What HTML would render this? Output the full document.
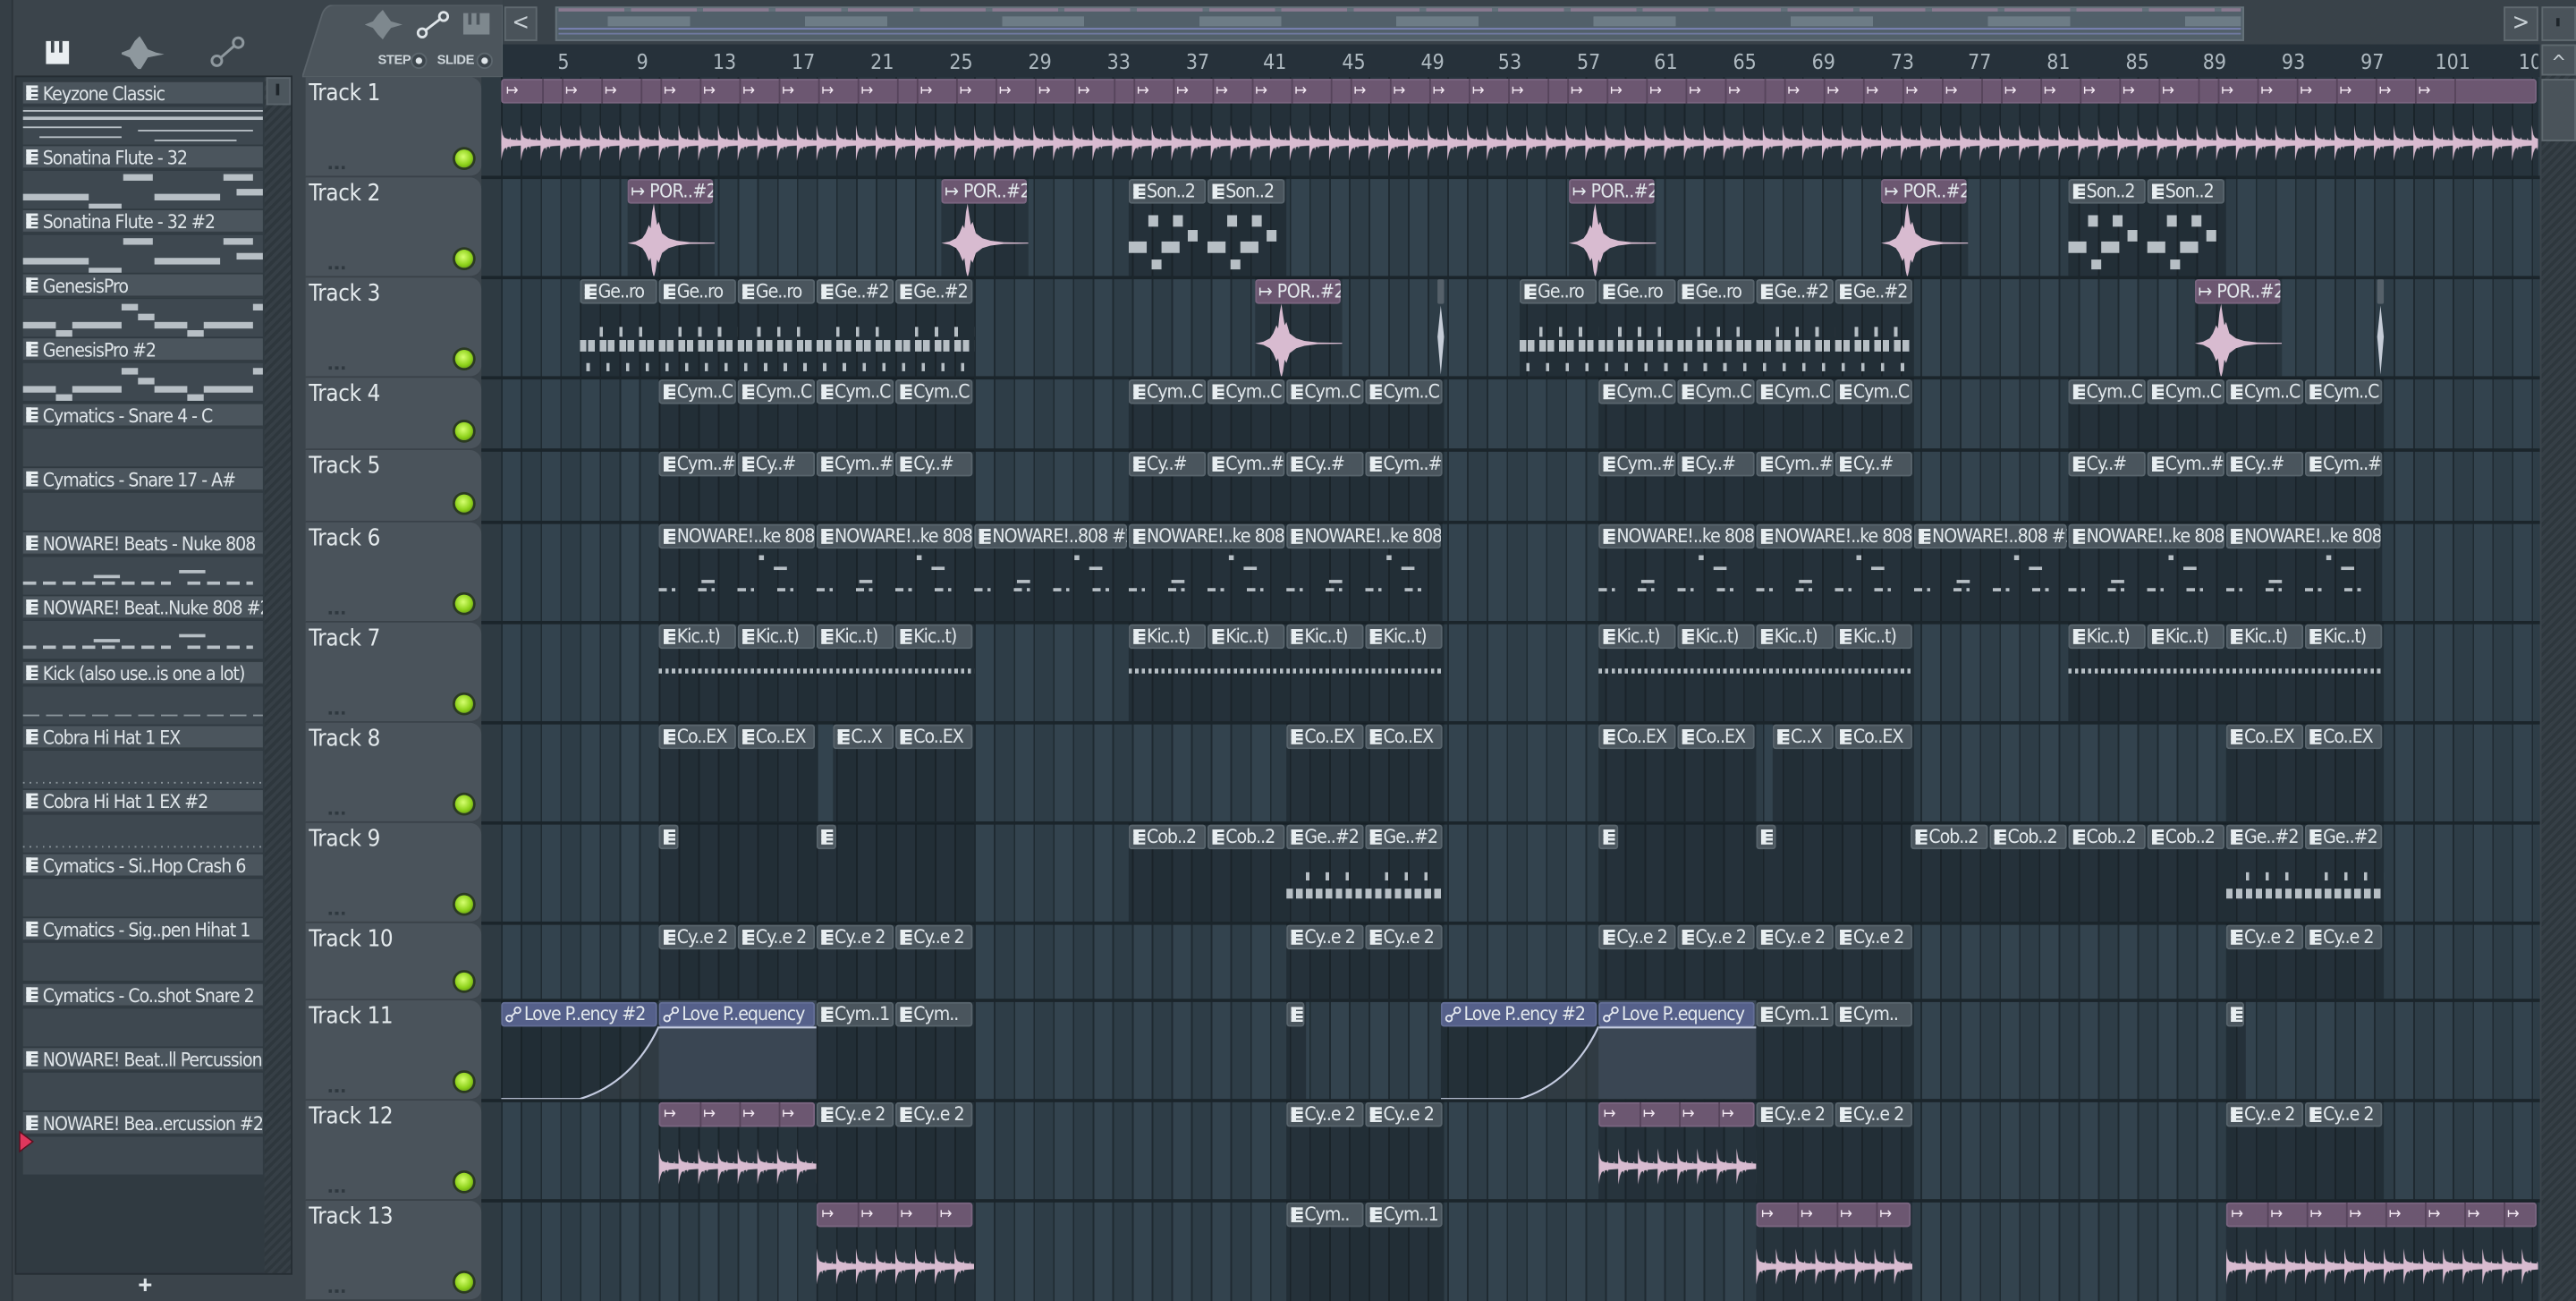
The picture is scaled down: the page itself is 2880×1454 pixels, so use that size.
<!DOCTYPE html>
<html><head><meta charset="utf-8">
<style>
*{margin:0;padding:0;box-sizing:border-box}
html,body{width:2880px;height:1454px;overflow:hidden;background:#3a434a}
#s{position:absolute;left:0;top:0;width:1568px;height:792px;transform:scale(1.83673,1.83586);transform-origin:0 0;background:#3b444b;font-family:"Liberation Sans Narrow","DejaVu Sans Condensed","Liberation Sans",sans-serif;color:#dfe5e9}
.ab{position:absolute}
.c{position:absolute;overflow:hidden}
.c .h{position:absolute;left:0;right:1px;top:1px;height:15px;border-radius:2px;font-size:11.5px;letter-spacing:-0.55px;line-height:15px;white-space:nowrap;overflow:hidden;padding-left:11px;color:#e2e8ec}
.p{background:rgba(18,26,32,.42)}
.p .h{background:#4a555d;box-shadow:inset 0 0 0 1px #58646c}
.p .h::before{content:"";position:absolute;left:3px;top:3px;width:7px;height:9px;background:linear-gradient(90deg,#e8eef1 0 3px,transparent 3px),repeating-linear-gradient(180deg,#e8eef1 0 1.6px,#4a555d 1.6px 2.6px),#e8eef1}
.a{background:rgba(18,26,32,.35)}
.a .h{background:#6c5771;box-shadow:inset 0 0 0 1px #7a6580;padding-left:2px;letter-spacing:-0.3px}
.au{background:rgba(18,26,32,.45)}
.au .h{background:#55608a;box-shadow:inset 0 0 0 1px #636e96;padding-left:14px}
.seg{display:inline-block;width:24px;height:15px;border-right:1px solid #56445b;font-size:10px;color:#f3e8f2;padding-left:1px;vertical-align:top;letter-spacing:0}
.trk{position:absolute;left:186px;width:107px;background:#4a535b;border-radius:0 7px 7px 0;border-bottom:1px solid #3a4249}
.trk b{position:absolute;left:2px;top:2px;font-weight:normal;font-size:14px;letter-spacing:-0.2px;color:#e4eaed}
.trk i{position:absolute;left:14px;bottom:4px;width:11px;height:2px;background:repeating-linear-gradient(90deg,#2f383f 0 2px,transparent 2px 4px)}
.trk u{position:absolute;right:5px;bottom:5px;width:11px;height:11px;border-radius:50%;background:radial-gradient(circle at 45% 40%,#d6ff70,#8ed21b 55%,#4f7d0c);box-shadow:0 0 0 1.5px #2b3a22}
.ch{position:absolute;left:14px;width:146px}
.ch .t{height:14px;background:#4b555d;border-bottom:1px solid #333c43;font-size:11.5px;letter-spacing:-0.55px;line-height:14px;padding-left:12px;white-space:nowrap;overflow:hidden;position:relative;color:#dfe5e9}
.ch .t::before{content:"";position:absolute;left:2px;top:2px;width:7px;height:9px;background:linear-gradient(90deg,#e8eef1 0 3px,transparent 3px),repeating-linear-gradient(180deg,#e8eef1 0 1.6px,#4b555d 1.6px 2.6px),#e8eef1}
.ch .bd{height:23px;background:#3e4850;margin-top:1px;position:relative}
.n{position:absolute;background:#b7bfc5}
.rn{position:absolute;top:30px;font-size:12.5px;color:#aeb9c0;transform:translateX(-50%)}
</style></head><body>
<div id="s">
<svg width="0" height="0" style="position:absolute"><defs>
<pattern id="wv" width="12" height="46" patternUnits="userSpaceOnUse"><path d="M0 25 L0 14 L1 20 L2 21.8 L4 22.5 L7 23 L12 23.4 L12 26.6 L7 27 L4 27.5 L2 28.5 L1 31 L0 36 Z" fill="#d8bbd0"/><path d="M5 23 L5.5 21.5 L6 23 Z M9 23 L9.5 22 L10 23 Z M5 27 L5.5 28.5 L6 27 Z M3 27 L3.5 29.5 L4 27 Z" fill="#d8bbd0"/></pattern>
<symbol id="por" viewBox="0 0 53 46"><path d="M0 25 L5 24 L9 22 L11 19 L13 14 L14 16 L15 6 L16 1 L17 8 L18 14 L19 12 L21 19 L25 22 L30 23.5 L38 24.5 L53 24.7 L53 25.3 L38 25.5 L30 26.5 L25 28 L21 31 L19 37 L18 35 L17 42 L16 46 L15 42 L14 34 L13 36 L11 31 L9 28 L5 26 Z" fill="#d8bbd0"/></symbol>
</defs></svg>

<!-- left strip -->
<div class="ab" style="left:0;top:0;width:8px;height:792px;background:#353e45;border-right:1px solid #2c343a"></div>
<div class="ab" style="left:28px;top:25px;width:14px;height:14px;background:#e9eef1"></div>
<div class="ab" style="left:31px;top:25px;width:2px;height:7px;background:#3b444b"></div>
<div class="ab" style="left:36px;top:25px;width:2px;height:7px;background:#3b444b"></div>
<svg class="ab" style="left:74px;top:22px" width="26" height="20"><path d="M0 10 L5 8 L8 3 L11 0 L13 3 L16 8 L21 10 L26 11 L21 12 L16 13 L13 18 L11 21 L8 18 L5 13 L0 11Z" fill="#8e989e"/></svg>
<svg class="ab" style="left:128px;top:22px" width="22" height="20"><circle cx="4" cy="15" r="3" fill="none" stroke="#8e989e" stroke-width="1.6"/><circle cx="17" cy="4" r="3" fill="none" stroke="#8e989e" stroke-width="1.6"/><line x1="6.5" y1="13" x2="14.5" y2="6" stroke="#8e989e" stroke-width="1.6"/></svg>
<div class="ab" style="left:9px;top:46px;width:169px;height:730px;background:#303a41;border:1px solid #252d33"></div>
<div class="ab" style="left:161px;top:47px;width:16px;height:728px;background:repeating-linear-gradient(135deg,#363f46 0 2px,#2e373d 2px 4px)"></div>
<div class="ab" style="left:162px;top:47px;width:15px;height:17px;background:#4c565d;border:1px solid #5b656c"></div>
<div class="ab" style="left:168px;top:51px;width:2px;height:7px;background:#1e252a"></div>
<div class="ab" style="left:84px;top:774px;font-size:15px;color:#dfe5e9;font-family:'Liberation Sans',sans-serif;font-weight:bold">+</div>

<div class="ch" style="top:50px"><div class="t">Keyzone Classic</div><div class="bd"><div class="n" style="left:0;top:2px;width:146px;height:1px"></div><div class="n" style="left:0;top:6px;width:146px;height:2px"></div><div class="n" style="left:0;top:12px;width:60px;height:1px"></div><div class="n" style="left:70px;top:14px;width:70px;height:1px"></div><div class="n" style="left:10px;top:18px;width:50px;height:1px"></div><div class="n" style="left:80px;top:20px;width:50px;height:1px"></div></div></div>
<div class="ch" style="top:89px"><div class="t">Sonatina Flute - 32</div><div class="bd"><div class="n" style="left:61px;top:2px;width:18px;height:4px"></div><div class="n" style="left:122px;top:2px;width:18px;height:4px"></div><div class="n" style="left:130px;top:11px;width:16px;height:4px"></div><div class="n" style="left:0;top:14px;width:40px;height:4px"></div><div class="n" style="left:80px;top:14px;width:40px;height:4px"></div><div class="n" style="left:40px;top:20px;width:20px;height:3px"></div></div></div>
<div class="ch" style="top:128px"><div class="t">Sonatina Flute - 32 #2</div><div class="bd"><div class="n" style="left:61px;top:2px;width:18px;height:4px"></div><div class="n" style="left:122px;top:2px;width:18px;height:4px"></div><div class="n" style="left:130px;top:11px;width:16px;height:4px"></div><div class="n" style="left:0;top:14px;width:40px;height:4px"></div><div class="n" style="left:80px;top:14px;width:40px;height:4px"></div><div class="n" style="left:40px;top:20px;width:20px;height:3px"></div></div></div>
<div class="ch" style="top:167px"><div class="t">GenesisPro</div><div class="bd"><div class="n" style="left:60px;top:3px;width:10px;height:4px"></div><div class="n" style="left:140px;top:3px;width:6px;height:4px"></div><div class="n" style="left:70px;top:9px;width:10px;height:4px"></div><div class="n" style="left:0;top:14px;width:20px;height:4px"></div><div class="n" style="left:30px;top:14px;width:30px;height:4px"></div><div class="n" style="left:80px;top:14px;width:20px;height:4px"></div><div class="n" style="left:110px;top:14px;width:30px;height:4px"></div><div class="n" style="left:20px;top:19px;width:10px;height:4px"></div><div class="n" style="left:100px;top:19px;width:10px;height:4px"></div></div></div>
<div class="ch" style="top:206px"><div class="t">GenesisPro #2</div><div class="bd"><div class="n" style="left:60px;top:3px;width:10px;height:4px"></div><div class="n" style="left:140px;top:3px;width:6px;height:4px"></div><div class="n" style="left:70px;top:9px;width:10px;height:4px"></div><div class="n" style="left:0;top:14px;width:20px;height:4px"></div><div class="n" style="left:30px;top:14px;width:30px;height:4px"></div><div class="n" style="left:80px;top:14px;width:20px;height:4px"></div><div class="n" style="left:110px;top:14px;width:30px;height:4px"></div><div class="n" style="left:20px;top:19px;width:10px;height:4px"></div><div class="n" style="left:100px;top:19px;width:10px;height:4px"></div></div></div>
<div class="ch" style="top:246px"><div class="t">Cymatics - Snare 4 - C</div><div class="bd"></div></div>
<div class="ch" style="top:285px"><div class="t">Cymatics - Snare 17 - A#</div><div class="bd"></div></div>
<div class="ch" style="top:324px"><div class="t">NOWARE! Beats - Nuke 808</div><div class="bd"><div class="n" style="left:95px;top:8px;width:16px;height:1.5px"></div><div class="n" style="left:43px;top:11px;width:16px;height:1.5px"></div><div class="n" style="left:0;top:15px;width:90px;height:1.5px;background:repeating-linear-gradient(90deg,#b7bfc5 0 8px,transparent 8px 12px)"></div><div class="n" style="left:100px;top:15px;width:40px;height:1.5px;background:repeating-linear-gradient(90deg,#b7bfc5 0 8px,transparent 8px 12px)"></div></div></div>
<div class="ch" style="top:363px"><div class="t">NOWARE! Beat..Nuke 808 #2</div><div class="bd"><div class="n" style="left:95px;top:8px;width:16px;height:1.5px"></div><div class="n" style="left:43px;top:11px;width:16px;height:1.5px"></div><div class="n" style="left:0;top:15px;width:90px;height:1.5px;background:repeating-linear-gradient(90deg,#b7bfc5 0 8px,transparent 8px 12px)"></div><div class="n" style="left:100px;top:15px;width:40px;height:1.5px;background:repeating-linear-gradient(90deg,#b7bfc5 0 8px,transparent 8px 12px)"></div></div></div>
<div class="ch" style="top:403px"><div class="t">Kick (also use..is one a lot)</div><div class="bd"><div class="n" style="left:0;top:17px;width:146px;height:1px;background:repeating-linear-gradient(90deg,#8a949a 0 10px,transparent 10px 14px)"></div></div></div>
<div class="ch" style="top:442px"><div class="t">Cobra Hi Hat 1 EX</div><div class="bd"><div class="n" style="left:0;top:19px;width:146px;height:1px;background:repeating-linear-gradient(90deg,#8a949a 0 1px,transparent 1px 4px)"></div></div></div>
<div class="ch" style="top:481px"><div class="t">Cobra Hi Hat 1 EX #2</div><div class="bd"><div class="n" style="left:0;top:19px;width:146px;height:1px;background:repeating-linear-gradient(90deg,#8a949a 0 1px,transparent 1px 4px)"></div></div></div>
<div class="ch" style="top:520px"><div class="t">Cymatics - Si..Hop Crash 6</div><div class="bd"></div></div>
<div class="ch" style="top:559px"><div class="t">Cymatics - Sig..pen Hihat 1</div><div class="bd"></div></div>
<div class="ch" style="top:599px"><div class="t">Cymatics - Co..shot Snare 2</div><div class="bd"></div></div>
<div class="ch" style="top:638px"><div class="t">NOWARE! Beat..ll Percussion</div><div class="bd"></div></div>
<div class="ch" style="top:677px"><div class="t">NOWARE! Bea..ercussion #2</div><div class="bd"></div></div>
<svg class="ab" style="left:11px;top:688px" width="10" height="14"><path d="M1 1 L9 7 L1 13Z" fill="#e0375d" stroke="#5a1020" stroke-width=".8"/></svg>

<!-- toolbar tab -->
<svg class="ab" style="left:184px;top:3px" width="122" height="44"><path d="M0 44 L12 6 Q14 0 20 0 L122 0 L122 44Z" fill="#4c555c" stroke="#5a636a" stroke-width="1"/></svg>
<svg class="ab" style="left:222px;top:6px" width="24" height="18"><path d="M0 9 L5 7 L8 3 L11 0 L13 3 L16 7 L23 9 L16 11 L13 15 L11 18 L8 15 L5 11Z" fill="#7e888e"/></svg>
<svg class="ab" style="left:253px;top:6px" width="22" height="18"><circle cx="4" cy="14" r="2.6" fill="none" stroke="#dfe5e9" stroke-width="1.5"/><circle cx="17" cy="4" r="2.6" fill="none" stroke="#dfe5e9" stroke-width="1.5"/><line x1="6.2" y1="12.3" x2="14.8" y2="5.7" stroke="#dfe5e9" stroke-width="1.5"/></svg>
<div class="ab" style="left:282px;top:8px;width:16px;height:13px;background:#7e888e"></div>
<div class="ab" style="left:285px;top:8px;width:2px;height:7px;background:#4c555c"></div>
<div class="ab" style="left:290px;top:8px;width:2px;height:7px;background:#4c555c"></div>
<div class="ab" style="left:230px;top:32px;font-size:8px;letter-spacing:-0.2px;color:#ccd4d9;font-family:'Liberation Sans',sans-serif;font-weight:bold">STEP</div>
<div class="ab" style="left:250px;top:32px;width:10px;height:10px;border-radius:50%;background:#3c454c;border:1px solid #5d676e"></div><div class="ab" style="left:253px;top:35px;width:4px;height:4px;border-radius:50%;background:#dfe5e9"></div>
<div class="ab" style="left:266px;top:32px;font-size:8px;letter-spacing:-0.2px;color:#ccd4d9;font-family:'Liberation Sans',sans-serif;font-weight:bold">SLIDE</div>
<div class="ab" style="left:290px;top:32px;width:10px;height:10px;border-radius:50%;background:#3c454c;border:1px solid #5d676e"></div><div class="ab" style="left:293px;top:35px;width:4px;height:4px;border-radius:50%;background:#dfe5e9"></div>

<!-- top bar -->
<div class="ab" style="left:306px;top:0;width:1262px;height:27px;background:#394249"></div>
<div class="ab" style="left:307px;top:4px;width:20px;height:21px;background:#4a535a;border:1px solid #5f696f;color:#c8d0d5;font-size:14px;text-align:center;line-height:19px">&lt;</div>
<div class="ab" style="left:338px;top:4px;width:1028px;height:21px;background:#52606a;border:1px solid #66727a"></div>
<div class="ab" style="left:340px;top:5px;width:1024px;height:2px;background:repeating-linear-gradient(90deg,#8a7a90 0 40px,#62707a 40px 44px)"></div>
<div class="ab" style="left:340px;top:17px;width:1024px;height:1px;background:#7c84b8"></div>
<div class="ab" style="left:340px;top:20px;width:1024px;height:1px;background:#7c84b8;opacity:.7"></div>
<div class="ab" style="left:340px;top:10px;width:1024px;height:6px;background:repeating-linear-gradient(90deg,transparent 0 30px,rgba(160,175,185,.35) 30px 80px,transparent 80px 120px)"></div>
<div class="ab" style="left:1524px;top:4px;width:21px;height:21px;background:#4a535a;border:1px solid #5f696f;color:#c8d0d5;font-size:14px;text-align:center;line-height:19px">&gt;</div>
<div class="ab" style="left:1547px;top:4px;width:21px;height:21px;background:#4a535a;border:1px solid #5f696f"></div>
<div class="ab" style="left:1556px;top:11px;width:2px;height:5px;background:#1e252a"></div>
<!-- ruler -->
<div class="ab" style="left:306px;top:27px;width:1240px;height:20px;background:#26313a"></div>
<div class="rn" style="left:343px">5</div><div class="rn" style="left:391px">9</div><div class="rn" style="left:441px">13</div><div class="rn" style="left:489px">17</div><div class="rn" style="left:537px">21</div><div class="rn" style="left:585px">25</div><div class="rn" style="left:633px">29</div><div class="rn" style="left:681px">33</div><div class="rn" style="left:729px">37</div><div class="rn" style="left:776px">41</div><div class="rn" style="left:824px">45</div><div class="rn" style="left:872px">49</div><div class="rn" style="left:919px">53</div><div class="rn" style="left:967px">57</div><div class="rn" style="left:1014px">61</div><div class="rn" style="left:1062px">65</div><div class="rn" style="left:1110px">69</div><div class="rn" style="left:1158px">73</div><div class="rn" style="left:1205px">77</div><div class="rn" style="left:1253px">81</div><div class="rn" style="left:1301px">85</div><div class="rn" style="left:1348px">89</div><div class="rn" style="left:1396px">93</div><div class="rn" style="left:1444px">97</div><div class="rn" style="left:1493px">101</div><div class="ab" style="left:1533px;top:30px;font-size:12.5px;color:#aeb9c0;width:12px;overflow:hidden">10</div>
<!-- right scrollbar -->
<div class="ab" style="left:1547px;top:27px;width:21px;height:765px;background:repeating-linear-gradient(135deg,#363f46 0 2px,#2e373d 2px 4px)"></div>
<div class="ab" style="left:1547px;top:27px;width:21px;height:19px;background:#4a535a;border:1px solid #5f696f;color:#c8d0d5;font-size:12px;text-align:center;line-height:20px">^</div>
<div class="ab" style="left:1547px;top:48px;width:21px;height:38px;background:#4a535a;border:1px solid #5f696f"></div>

<div class="ab" style="left:293px;top:47px;width:13px;height:745px;background:#2e3a42"></div>
<div class="ab" style="left:305px;top:47px;width:1241px;height:745px;background:repeating-linear-gradient(90deg,#1f2a31 0 1px,transparent 1px 12px),repeating-linear-gradient(90deg,#33434e 0 12px,#2e3d47 12px 24px)"></div>
<div class="ab" style="left:293px;top:107px;width:1253px;height:2px;background:#1b252b"></div>
<div class="ab" style="left:293px;top:168px;width:1253px;height:2px;background:#1b252b"></div>
<div class="ab" style="left:293px;top:229px;width:1253px;height:2px;background:#1b252b"></div>
<div class="ab" style="left:293px;top:273px;width:1253px;height:2px;background:#1b252b"></div>
<div class="ab" style="left:293px;top:317px;width:1253px;height:2px;background:#1b252b"></div>
<div class="ab" style="left:293px;top:378px;width:1253px;height:2px;background:#1b252b"></div>
<div class="ab" style="left:293px;top:439px;width:1253px;height:2px;background:#1b252b"></div>
<div class="ab" style="left:293px;top:500px;width:1253px;height:2px;background:#1b252b"></div>
<div class="ab" style="left:293px;top:561px;width:1253px;height:2px;background:#1b252b"></div>
<div class="ab" style="left:293px;top:608px;width:1253px;height:2px;background:#1b252b"></div>
<div class="ab" style="left:293px;top:669px;width:1253px;height:2px;background:#1b252b"></div>
<div class="ab" style="left:293px;top:730px;width:1253px;height:2px;background:#1b252b"></div>

<div class="trk" style="top:47px;height:61px"><b>Track 1</b><i></i><u></u></div>
<div class="trk" style="top:108px;height:61px"><b>Track 2</b><i></i><u></u></div>
<div class="trk" style="top:169px;height:61px"><b>Track 3</b><i></i><u></u></div>
<div class="trk" style="top:230px;height:44px"><b>Track 4</b><u></u></div>
<div class="trk" style="top:274px;height:44px"><b>Track 5</b><u></u></div>
<div class="trk" style="top:318px;height:61px"><b>Track 6</b><i></i><u></u></div>
<div class="trk" style="top:379px;height:61px"><b>Track 7</b><i></i><u></u></div>
<div class="trk" style="top:440px;height:61px"><b>Track 8</b><i></i><u></u></div>
<div class="trk" style="top:501px;height:61px"><b>Track 9</b><i></i><u></u></div>
<div class="trk" style="top:562px;height:47px"><b>Track 10</b><u></u></div>
<div class="trk" style="top:609px;height:61px"><b>Track 11</b><i></i><u></u></div>
<div class="trk" style="top:670px;height:61px"><b>Track 12</b><i></i><u></u></div>
<div class="trk" style="top:731px;height:61px"><b>Track 13</b><i></i><u></u></div>

<!-- TRACK 1 -->
<div class="c a" style="left:305px;top:47px;width:1240px;height:60px"><div class="h"><span class="seg">↦</span><span class="seg" style="width:12px"></span><span class="seg">↦</span><span class="seg">↦</span><span class="seg" style="width:12px"></span><span class="seg">↦</span><span class="seg">↦</span><span class="seg">↦</span><span class="seg">↦</span><span class="seg">↦</span><span class="seg">↦</span><span class="seg" style="width:12px"></span><span class="seg">↦</span><span class="seg">↦</span><span class="seg">↦</span><span class="seg">↦</span><span class="seg">↦</span><span class="seg" style="width:12px"></span><span class="seg">↦</span><span class="seg">↦</span><span class="seg">↦</span><span class="seg">↦</span><span class="seg">↦</span><span class="seg" style="width:12px"></span><span class="seg">↦</span><span class="seg">↦</span><span class="seg">↦</span><span class="seg">↦</span><span class="seg">↦</span><span class="seg" style="width:12px"></span><span class="seg">↦</span><span class="seg">↦</span><span class="seg">↦</span><span class="seg">↦</span><span class="seg">↦</span><span class="seg" style="width:12px"></span><span class="seg">↦</span><span class="seg">↦</span><span class="seg">↦</span><span class="seg">↦</span><span class="seg">↦</span><span class="seg" style="width:12px"></span><span class="seg">↦</span><span class="seg">↦</span><span class="seg">↦</span><span class="seg">↦</span><span class="seg">↦</span><span class="seg" style="width:12px"></span><span class="seg">↦</span><span class="seg">↦</span><span class="seg">↦</span><span class="seg">↦</span><span class="seg">↦</span><span class="seg">↦</span></div><svg class="ab" style="left:0;top:15px" width="1240" height="46"><rect width="1240" height="46" fill="url(#wv)"/></svg></div>

<!-- TRACK 2 -->
<div class="c a" style="left:382px;top:108px;width:53px;height:60px"><div class="h">↦ POR..#2</div><svg class="ab" style="left:0;top:15px" width="53" height="46"><use href="#por"/></svg></div>
<div class="c a" style="left:573px;top:108px;width:53px;height:60px"><div class="h">↦ POR..#2</div><svg class="ab" style="left:0;top:15px" width="53" height="46"><use href="#por"/></svg></div>
<div class="c a" style="left:955px;top:108px;width:53px;height:60px"><div class="h">↦ POR..#2</div><svg class="ab" style="left:0;top:15px" width="53" height="46"><use href="#por"/></svg></div>
<div class="c a" style="left:1145px;top:108px;width:53px;height:60px"><div class="h">↦ POR..#2</div><svg class="ab" style="left:0;top:15px" width="53" height="46"><use href="#por"/></svg></div>
<div class="c p" style="left:687px;top:108px;width:48px;height:60px"><div class="h">Son..2</div><div class="n" style="left:12px;top:23px;width:6px;height:7px"></div><div class="n" style="left:27px;top:23px;width:6px;height:7px"></div><div class="n" style="left:0;top:39px;width:11px;height:7px"></div><div class="n" style="left:20px;top:39px;width:11px;height:7px"></div><div class="n" style="left:36px;top:32px;width:6px;height:7px"></div><div class="n" style="left:14px;top:50px;width:6px;height:6px"></div></div>
<div class="c p" style="left:735px;top:108px;width:48px;height:60px"><div class="h">Son..2</div><div class="n" style="left:12px;top:23px;width:6px;height:7px"></div><div class="n" style="left:27px;top:23px;width:6px;height:7px"></div><div class="n" style="left:0;top:39px;width:11px;height:7px"></div><div class="n" style="left:20px;top:39px;width:11px;height:7px"></div><div class="n" style="left:36px;top:32px;width:6px;height:7px"></div><div class="n" style="left:14px;top:50px;width:6px;height:6px"></div></div>
<div class="c p" style="left:1259px;top:108px;width:48px;height:60px"><div class="h">Son..2</div><div class="n" style="left:12px;top:23px;width:6px;height:7px"></div><div class="n" style="left:27px;top:23px;width:6px;height:7px"></div><div class="n" style="left:0;top:39px;width:11px;height:7px"></div><div class="n" style="left:20px;top:39px;width:11px;height:7px"></div><div class="n" style="left:36px;top:32px;width:6px;height:7px"></div><div class="n" style="left:14px;top:50px;width:6px;height:6px"></div></div>
<div class="c p" style="left:1307px;top:108px;width:48px;height:60px"><div class="h">Son..2</div><div class="n" style="left:12px;top:23px;width:6px;height:7px"></div><div class="n" style="left:27px;top:23px;width:6px;height:7px"></div><div class="n" style="left:0;top:39px;width:11px;height:7px"></div><div class="n" style="left:20px;top:39px;width:11px;height:7px"></div><div class="n" style="left:36px;top:32px;width:6px;height:7px"></div><div class="n" style="left:14px;top:50px;width:6px;height:6px"></div></div>

<!-- TRACK 3 -->
<div class="c p" style="left:353px;top:169px;width:48px;height:60px"><div class="h">Ge..ro</div><div class="n" style="left:0;top:38px;width:48px;height:7px;background:repeating-linear-gradient(90deg,#b7bfc5 0 4px,transparent 4px 5px,#b7bfc5 5px 9px,transparent 9px 12px)"></div><div class="n" style="left:4px;top:30px;width:44px;height:6px;background:repeating-linear-gradient(90deg,transparent 0 8px,#b7bfc5 8px 10px,transparent 10px 12px)"></div><div class="n" style="left:0;top:52px;width:48px;height:5px;background:repeating-linear-gradient(90deg,transparent 0 4px,#b7bfc5 4px 6px,transparent 6px 12px)"></div></div>
<div class="c p" style="left:401px;top:169px;width:48px;height:60px"><div class="h">Ge..ro</div><div class="n" style="left:0;top:38px;width:48px;height:7px;background:repeating-linear-gradient(90deg,#b7bfc5 0 4px,transparent 4px 5px,#b7bfc5 5px 9px,transparent 9px 12px)"></div><div class="n" style="left:4px;top:30px;width:44px;height:6px;background:repeating-linear-gradient(90deg,transparent 0 8px,#b7bfc5 8px 10px,transparent 10px 12px)"></div><div class="n" style="left:0;top:52px;width:48px;height:5px;background:repeating-linear-gradient(90deg,transparent 0 4px,#b7bfc5 4px 6px,transparent 6px 12px)"></div></div>
<div class="c p" style="left:449px;top:169px;width:48px;height:60px"><div class="h">Ge..ro</div><div class="n" style="left:0;top:38px;width:48px;height:7px;background:repeating-linear-gradient(90deg,#b7bfc5 0 4px,transparent 4px 5px,#b7bfc5 5px 9px,transparent 9px 12px)"></div><div class="n" style="left:4px;top:30px;width:44px;height:6px;background:repeating-linear-gradient(90deg,transparent 0 8px,#b7bfc5 8px 10px,transparent 10px 12px)"></div><div class="n" style="left:0;top:52px;width:48px;height:5px;background:repeating-linear-gradient(90deg,transparent 0 4px,#b7bfc5 4px 6px,transparent 6px 12px)"></div></div>
<div class="c p" style="left:497px;top:169px;width:48px;height:60px"><div class="h">Ge..#2</div><div class="n" style="left:0;top:38px;width:48px;height:7px;background:repeating-linear-gradient(90deg,#b7bfc5 0 4px,transparent 4px 5px,#b7bfc5 5px 9px,transparent 9px 12px)"></div><div class="n" style="left:4px;top:30px;width:44px;height:6px;background:repeating-linear-gradient(90deg,transparent 0 8px,#b7bfc5 8px 10px,transparent 10px 12px)"></div><div class="n" style="left:0;top:52px;width:48px;height:5px;background:repeating-linear-gradient(90deg,transparent 0 4px,#b7bfc5 4px 6px,transparent 6px 12px)"></div></div>
<div class="c p" style="left:545px;top:169px;width:48px;height:60px"><div class="h">Ge..#2</div><div class="n" style="left:0;top:38px;width:48px;height:7px;background:repeating-linear-gradient(90deg,#b7bfc5 0 4px,transparent 4px 5px,#b7bfc5 5px 9px,transparent 9px 12px)"></div><div class="n" style="left:4px;top:30px;width:44px;height:6px;background:repeating-linear-gradient(90deg,transparent 0 8px,#b7bfc5 8px 10px,transparent 10px 12px)"></div><div class="n" style="left:0;top:52px;width:48px;height:5px;background:repeating-linear-gradient(90deg,transparent 0 4px,#b7bfc5 4px 6px,transparent 6px 12px)"></div></div>
<div class="c a" style="left:764px;top:169px;width:53px;height:60px"><div class="h">↦ POR..#2</div><svg class="ab" style="left:0;top:15px" width="53" height="46"><use href="#por"/></svg></div>
<svg class="ab" style="left:874px;top:170px" width="6" height="60"><rect x="1" y="0" width="4" height="15" rx="1" fill="#56616a"/><path d="M3 16 L5 35 L3 58 L1 35Z" fill="#c6cdd8"/></svg>
<div class="c p" style="left:925px;top:169px;width:48px;height:60px"><div class="h">Ge..ro</div><div class="n" style="left:0;top:38px;width:48px;height:7px;background:repeating-linear-gradient(90deg,#b7bfc5 0 4px,transparent 4px 5px,#b7bfc5 5px 9px,transparent 9px 12px)"></div><div class="n" style="left:4px;top:30px;width:44px;height:6px;background:repeating-linear-gradient(90deg,transparent 0 8px,#b7bfc5 8px 10px,transparent 10px 12px)"></div><div class="n" style="left:0;top:52px;width:48px;height:5px;background:repeating-linear-gradient(90deg,transparent 0 4px,#b7bfc5 4px 6px,transparent 6px 12px)"></div></div>
<div class="c p" style="left:973px;top:169px;width:48px;height:60px"><div class="h">Ge..ro</div><div class="n" style="left:0;top:38px;width:48px;height:7px;background:repeating-linear-gradient(90deg,#b7bfc5 0 4px,transparent 4px 5px,#b7bfc5 5px 9px,transparent 9px 12px)"></div><div class="n" style="left:4px;top:30px;width:44px;height:6px;background:repeating-linear-gradient(90deg,transparent 0 8px,#b7bfc5 8px 10px,transparent 10px 12px)"></div><div class="n" style="left:0;top:52px;width:48px;height:5px;background:repeating-linear-gradient(90deg,transparent 0 4px,#b7bfc5 4px 6px,transparent 6px 12px)"></div></div>
<div class="c p" style="left:1021px;top:169px;width:48px;height:60px"><div class="h">Ge..ro</div><div class="n" style="left:0;top:38px;width:48px;height:7px;background:repeating-linear-gradient(90deg,#b7bfc5 0 4px,transparent 4px 5px,#b7bfc5 5px 9px,transparent 9px 12px)"></div><div class="n" style="left:4px;top:30px;width:44px;height:6px;background:repeating-linear-gradient(90deg,transparent 0 8px,#b7bfc5 8px 10px,transparent 10px 12px)"></div><div class="n" style="left:0;top:52px;width:48px;height:5px;background:repeating-linear-gradient(90deg,transparent 0 4px,#b7bfc5 4px 6px,transparent 6px 12px)"></div></div>
<div class="c p" style="left:1069px;top:169px;width:48px;height:60px"><div class="h">Ge..#2</div><div class="n" style="left:0;top:38px;width:48px;height:7px;background:repeating-linear-gradient(90deg,#b7bfc5 0 4px,transparent 4px 5px,#b7bfc5 5px 9px,transparent 9px 12px)"></div><div class="n" style="left:4px;top:30px;width:44px;height:6px;background:repeating-linear-gradient(90deg,transparent 0 8px,#b7bfc5 8px 10px,transparent 10px 12px)"></div><div class="n" style="left:0;top:52px;width:48px;height:5px;background:repeating-linear-gradient(90deg,transparent 0 4px,#b7bfc5 4px 6px,transparent 6px 12px)"></div></div>
<div class="c p" style="left:1117px;top:169px;width:48px;height:60px"><div class="h">Ge..#2</div><div class="n" style="left:0;top:38px;width:48px;height:7px;background:repeating-linear-gradient(90deg,#b7bfc5 0 4px,transparent 4px 5px,#b7bfc5 5px 9px,transparent 9px 12px)"></div><div class="n" style="left:4px;top:30px;width:44px;height:6px;background:repeating-linear-gradient(90deg,transparent 0 8px,#b7bfc5 8px 10px,transparent 10px 12px)"></div><div class="n" style="left:0;top:52px;width:48px;height:5px;background:repeating-linear-gradient(90deg,transparent 0 4px,#b7bfc5 4px 6px,transparent 6px 12px)"></div></div>
<div class="c a" style="left:1336px;top:169px;width:53px;height:60px"><div class="h">↦ POR..#2</div><svg class="ab" style="left:0;top:15px" width="53" height="46"><use href="#por"/></svg></div>
<svg class="ab" style="left:1446px;top:170px" width="6" height="60"><rect x="1" y="0" width="4" height="15" rx="1" fill="#56616a"/><path d="M3 16 L5 35 L3 58 L1 35Z" fill="#c6cdd8"/></svg>

<!-- TRACK 4 -->
<div class="c p" style="left:401px;top:230px;width:48px;height:43px"><div class="h">Cym..C</div></div>
<div class="c p" style="left:449px;top:230px;width:48px;height:43px"><div class="h">Cym..C</div></div>
<div class="c p" style="left:497px;top:230px;width:48px;height:43px"><div class="h">Cym..C</div></div>
<div class="c p" style="left:545px;top:230px;width:48px;height:43px"><div class="h">Cym..C</div></div>
<div class="c p" style="left:687px;top:230px;width:48px;height:43px"><div class="h">Cym..C</div></div>
<div class="c p" style="left:735px;top:230px;width:48px;height:43px"><div class="h">Cym..C</div></div>
<div class="c p" style="left:783px;top:230px;width:48px;height:43px"><div class="h">Cym..C</div></div>
<div class="c p" style="left:831px;top:230px;width:48px;height:43px"><div class="h">Cym..C</div></div>
<div class="c p" style="left:973px;top:230px;width:48px;height:43px"><div class="h">Cym..C</div></div>
<div class="c p" style="left:1021px;top:230px;width:48px;height:43px"><div class="h">Cym..C</div></div>
<div class="c p" style="left:1069px;top:230px;width:48px;height:43px"><div class="h">Cym..C</div></div>
<div class="c p" style="left:1117px;top:230px;width:48px;height:43px"><div class="h">Cym..C</div></div>
<div class="c p" style="left:1259px;top:230px;width:48px;height:43px"><div class="h">Cym..C</div></div>
<div class="c p" style="left:1307px;top:230px;width:48px;height:43px"><div class="h">Cym..C</div></div>
<div class="c p" style="left:1355px;top:230px;width:48px;height:43px"><div class="h">Cym..C</div></div>
<div class="c p" style="left:1403px;top:230px;width:48px;height:43px"><div class="h">Cym..C</div></div>

<!-- TRACK 5 -->
<div class="c p" style="left:401px;top:274px;width:48px;height:43px"><div class="h">Cym..#</div></div>
<div class="c p" style="left:449px;top:274px;width:48px;height:43px"><div class="h">Cy..#</div></div>
<div class="c p" style="left:497px;top:274px;width:48px;height:43px"><div class="h">Cym..#</div></div>
<div class="c p" style="left:545px;top:274px;width:48px;height:43px"><div class="h">Cy..#</div></div>
<div class="c p" style="left:687px;top:274px;width:48px;height:43px"><div class="h">Cy..#</div></div>
<div class="c p" style="left:735px;top:274px;width:48px;height:43px"><div class="h">Cym..#</div></div>
<div class="c p" style="left:783px;top:274px;width:48px;height:43px"><div class="h">Cy..#</div></div>
<div class="c p" style="left:831px;top:274px;width:48px;height:43px"><div class="h">Cym..#</div></div>
<div class="c p" style="left:973px;top:274px;width:48px;height:43px"><div class="h">Cym..#</div></div>
<div class="c p" style="left:1021px;top:274px;width:48px;height:43px"><div class="h">Cy..#</div></div>
<div class="c p" style="left:1069px;top:274px;width:48px;height:43px"><div class="h">Cym..#</div></div>
<div class="c p" style="left:1117px;top:274px;width:48px;height:43px"><div class="h">Cy..#</div></div>
<div class="c p" style="left:1259px;top:274px;width:48px;height:43px"><div class="h">Cy..#</div></div>
<div class="c p" style="left:1307px;top:274px;width:48px;height:43px"><div class="h">Cym..#</div></div>
<div class="c p" style="left:1355px;top:274px;width:48px;height:43px"><div class="h">Cy..#</div></div>
<div class="c p" style="left:1403px;top:274px;width:48px;height:43px"><div class="h">Cym..#</div></div>

<!-- TRACK 6 -->
<div class="c p" style="left:401px;top:318px;width:96px;height:60px"><div class="h">NOWARE!..ke 808</div><div class="n" style="left:61px;top:20px;width:3px;height:3px"></div><div class="n" style="left:70px;top:27px;width:8px;height:2px"></div><div class="n" style="left:26px;top:35px;width:8px;height:2px"></div><div class="n" style="left:0;top:40px;width:96px;height:2px;background:repeating-linear-gradient(90deg,#b7bfc5 0 5px,transparent 5px 8px,#b7bfc5 8px 10px,transparent 10px 24px)"></div></div>
<div class="c p" style="left:497px;top:318px;width:96px;height:60px"><div class="h">NOWARE!..ke 808</div><div class="n" style="left:61px;top:20px;width:3px;height:3px"></div><div class="n" style="left:70px;top:27px;width:8px;height:2px"></div><div class="n" style="left:26px;top:35px;width:8px;height:2px"></div><div class="n" style="left:0;top:40px;width:96px;height:2px;background:repeating-linear-gradient(90deg,#b7bfc5 0 5px,transparent 5px 8px,#b7bfc5 8px 10px,transparent 10px 24px)"></div></div>
<div class="c p" style="left:593px;top:318px;width:94px;height:60px"><div class="h">NOWARE!..808 #2</div><div class="n" style="left:61px;top:20px;width:3px;height:3px"></div><div class="n" style="left:70px;top:27px;width:8px;height:2px"></div><div class="n" style="left:26px;top:35px;width:8px;height:2px"></div><div class="n" style="left:0;top:40px;width:96px;height:2px;background:repeating-linear-gradient(90deg,#b7bfc5 0 5px,transparent 5px 8px,#b7bfc5 8px 10px,transparent 10px 24px)"></div></div>
<div class="c p" style="left:687px;top:318px;width:96px;height:60px"><div class="h">NOWARE!..ke 808</div><div class="n" style="left:61px;top:20px;width:3px;height:3px"></div><div class="n" style="left:70px;top:27px;width:8px;height:2px"></div><div class="n" style="left:26px;top:35px;width:8px;height:2px"></div><div class="n" style="left:0;top:40px;width:96px;height:2px;background:repeating-linear-gradient(90deg,#b7bfc5 0 5px,transparent 5px 8px,#b7bfc5 8px 10px,transparent 10px 24px)"></div></div>
<div class="c p" style="left:783px;top:318px;width:95px;height:60px"><div class="h">NOWARE!..ke 808</div><div class="n" style="left:61px;top:20px;width:3px;height:3px"></div><div class="n" style="left:70px;top:27px;width:8px;height:2px"></div><div class="n" style="left:26px;top:35px;width:8px;height:2px"></div><div class="n" style="left:0;top:40px;width:96px;height:2px;background:repeating-linear-gradient(90deg,#b7bfc5 0 5px,transparent 5px 8px,#b7bfc5 8px 10px,transparent 10px 24px)"></div></div>
<div class="c p" style="left:973px;top:318px;width:96px;height:60px"><div class="h">NOWARE!..ke 808</div><div class="n" style="left:61px;top:20px;width:3px;height:3px"></div><div class="n" style="left:70px;top:27px;width:8px;height:2px"></div><div class="n" style="left:26px;top:35px;width:8px;height:2px"></div><div class="n" style="left:0;top:40px;width:96px;height:2px;background:repeating-linear-gradient(90deg,#b7bfc5 0 5px,transparent 5px 8px,#b7bfc5 8px 10px,transparent 10px 24px)"></div></div>
<div class="c p" style="left:1069px;top:318px;width:96px;height:60px"><div class="h">NOWARE!..ke 808</div><div class="n" style="left:61px;top:20px;width:3px;height:3px"></div><div class="n" style="left:70px;top:27px;width:8px;height:2px"></div><div class="n" style="left:26px;top:35px;width:8px;height:2px"></div><div class="n" style="left:0;top:40px;width:96px;height:2px;background:repeating-linear-gradient(90deg,#b7bfc5 0 5px,transparent 5px 8px,#b7bfc5 8px 10px,transparent 10px 24px)"></div></div>
<div class="c p" style="left:1165px;top:318px;width:94px;height:60px"><div class="h">NOWARE!..808 #2</div><div class="n" style="left:61px;top:20px;width:3px;height:3px"></div><div class="n" style="left:70px;top:27px;width:8px;height:2px"></div><div class="n" style="left:26px;top:35px;width:8px;height:2px"></div><div class="n" style="left:0;top:40px;width:96px;height:2px;background:repeating-linear-gradient(90deg,#b7bfc5 0 5px,transparent 5px 8px,#b7bfc5 8px 10px,transparent 10px 24px)"></div></div>
<div class="c p" style="left:1259px;top:318px;width:96px;height:60px"><div class="h">NOWARE!..ke 808</div><div class="n" style="left:61px;top:20px;width:3px;height:3px"></div><div class="n" style="left:70px;top:27px;width:8px;height:2px"></div><div class="n" style="left:26px;top:35px;width:8px;height:2px"></div><div class="n" style="left:0;top:40px;width:96px;height:2px;background:repeating-linear-gradient(90deg,#b7bfc5 0 5px,transparent 5px 8px,#b7bfc5 8px 10px,transparent 10px 24px)"></div></div>
<div class="c p" style="left:1355px;top:318px;width:95px;height:60px"><div class="h">NOWARE!..ke 808</div><div class="n" style="left:61px;top:20px;width:3px;height:3px"></div><div class="n" style="left:70px;top:27px;width:8px;height:2px"></div><div class="n" style="left:26px;top:35px;width:8px;height:2px"></div><div class="n" style="left:0;top:40px;width:96px;height:2px;background:repeating-linear-gradient(90deg,#b7bfc5 0 5px,transparent 5px 8px,#b7bfc5 8px 10px,transparent 10px 24px)"></div></div>

<!-- TRACK 7 -->
<div class="c p" style="left:401px;top:379px;width:48px;height:60px"><div class="h">Kic..t)</div><div class="n" style="left:0;top:28px;width:48px;height:3px;background:repeating-linear-gradient(90deg,#b7bfc5 0 2px,transparent 2px 4px)"></div></div>
<div class="c p" style="left:449px;top:379px;width:48px;height:60px"><div class="h">Kic..t)</div><div class="n" style="left:0;top:28px;width:48px;height:3px;background:repeating-linear-gradient(90deg,#b7bfc5 0 2px,transparent 2px 4px)"></div></div>
<div class="c p" style="left:497px;top:379px;width:48px;height:60px"><div class="h">Kic..t)</div><div class="n" style="left:0;top:28px;width:48px;height:3px;background:repeating-linear-gradient(90deg,#b7bfc5 0 2px,transparent 2px 4px)"></div></div>
<div class="c p" style="left:545px;top:379px;width:48px;height:60px"><div class="h">Kic..t)</div><div class="n" style="left:0;top:28px;width:48px;height:3px;background:repeating-linear-gradient(90deg,#b7bfc5 0 2px,transparent 2px 4px)"></div></div>
<div class="c p" style="left:687px;top:379px;width:48px;height:60px"><div class="h">Kic..t)</div><div class="n" style="left:0;top:28px;width:48px;height:3px;background:repeating-linear-gradient(90deg,#b7bfc5 0 2px,transparent 2px 4px)"></div></div>
<div class="c p" style="left:735px;top:379px;width:48px;height:60px"><div class="h">Kic..t)</div><div class="n" style="left:0;top:28px;width:48px;height:3px;background:repeating-linear-gradient(90deg,#b7bfc5 0 2px,transparent 2px 4px)"></div></div>
<div class="c p" style="left:783px;top:379px;width:48px;height:60px"><div class="h">Kic..t)</div><div class="n" style="left:0;top:28px;width:48px;height:3px;background:repeating-linear-gradient(90deg,#b7bfc5 0 2px,transparent 2px 4px)"></div></div>
<div class="c p" style="left:831px;top:379px;width:48px;height:60px"><div class="h">Kic..t)</div><div class="n" style="left:0;top:28px;width:48px;height:3px;background:repeating-linear-gradient(90deg,#b7bfc5 0 2px,transparent 2px 4px)"></div></div>
<div class="c p" style="left:973px;top:379px;width:48px;height:60px"><div class="h">Kic..t)</div><div class="n" style="left:0;top:28px;width:48px;height:3px;background:repeating-linear-gradient(90deg,#b7bfc5 0 2px,transparent 2px 4px)"></div></div>
<div class="c p" style="left:1021px;top:379px;width:48px;height:60px"><div class="h">Kic..t)</div><div class="n" style="left:0;top:28px;width:48px;height:3px;background:repeating-linear-gradient(90deg,#b7bfc5 0 2px,transparent 2px 4px)"></div></div>
<div class="c p" style="left:1069px;top:379px;width:48px;height:60px"><div class="h">Kic..t)</div><div class="n" style="left:0;top:28px;width:48px;height:3px;background:repeating-linear-gradient(90deg,#b7bfc5 0 2px,transparent 2px 4px)"></div></div>
<div class="c p" style="left:1117px;top:379px;width:48px;height:60px"><div class="h">Kic..t)</div><div class="n" style="left:0;top:28px;width:48px;height:3px;background:repeating-linear-gradient(90deg,#b7bfc5 0 2px,transparent 2px 4px)"></div></div>
<div class="c p" style="left:1259px;top:379px;width:48px;height:60px"><div class="h">Kic..t)</div><div class="n" style="left:0;top:28px;width:48px;height:3px;background:repeating-linear-gradient(90deg,#b7bfc5 0 2px,transparent 2px 4px)"></div></div>
<div class="c p" style="left:1307px;top:379px;width:48px;height:60px"><div class="h">Kic..t)</div><div class="n" style="left:0;top:28px;width:48px;height:3px;background:repeating-linear-gradient(90deg,#b7bfc5 0 2px,transparent 2px 4px)"></div></div>
<div class="c p" style="left:1355px;top:379px;width:48px;height:60px"><div class="h">Kic..t)</div><div class="n" style="left:0;top:28px;width:48px;height:3px;background:repeating-linear-gradient(90deg,#b7bfc5 0 2px,transparent 2px 4px)"></div></div>
<div class="c p" style="left:1403px;top:379px;width:48px;height:60px"><div class="h">Kic..t)</div><div class="n" style="left:0;top:28px;width:48px;height:3px;background:repeating-linear-gradient(90deg,#b7bfc5 0 2px,transparent 2px 4px)"></div></div>

<!-- TRACK 8 -->
<div class="c p" style="left:401px;top:440px;width:48px;height:60px"><div class="h">Co..EX</div></div>
<div class="c p" style="left:449px;top:440px;width:48px;height:60px"><div class="h">Co..EX</div></div>
<div class="c p" style="left:507px;top:440px;width:38px;height:60px"><div class="h">C..X</div></div>
<div class="c p" style="left:545px;top:440px;width:48px;height:60px"><div class="h">Co..EX</div></div>
<div class="c p" style="left:783px;top:440px;width:48px;height:60px"><div class="h">Co..EX</div></div>
<div class="c p" style="left:831px;top:440px;width:48px;height:60px"><div class="h">Co..EX</div></div>
<div class="c p" style="left:973px;top:440px;width:48px;height:60px"><div class="h">Co..EX</div></div>
<div class="c p" style="left:1021px;top:440px;width:48px;height:60px"><div class="h">Co..EX</div></div>
<div class="c p" style="left:1079px;top:440px;width:38px;height:60px"><div class="h">C..X</div></div>
<div class="c p" style="left:1117px;top:440px;width:48px;height:60px"><div class="h">Co..EX</div></div>
<div class="c p" style="left:1355px;top:440px;width:48px;height:60px"><div class="h">Co..EX</div></div>
<div class="c p" style="left:1403px;top:440px;width:48px;height:60px"><div class="h">Co..EX</div></div>

<!-- TRACK 9 -->
<div class="c p" style="left:401px;top:501px;width:96px;height:60px"><div class="h" style="right:84px"></div></div>
<div class="c p" style="left:497px;top:501px;width:96px;height:60px"><div class="h" style="right:84px"></div></div>
<div class="c p" style="left:687px;top:501px;width:48px;height:60px"><div class="h">Cob..2</div></div>
<div class="c p" style="left:735px;top:501px;width:48px;height:60px"><div class="h">Cob..2</div></div>
<div class="c p" style="left:783px;top:501px;width:48px;height:60px"><div class="h">Ge..#2</div><div class="n" style="left:0;top:40px;width:48px;height:6px;background:repeating-linear-gradient(90deg,#b7bfc5 0 4px,transparent 4px 6px)"></div><div class="n" style="left:4px;top:30px;width:44px;height:5px;background:repeating-linear-gradient(90deg,transparent 0 8px,#b7bfc5 8px 10px,transparent 10px 12px)"></div></div>
<div class="c p" style="left:831px;top:501px;width:48px;height:60px"><div class="h">Ge..#2</div><div class="n" style="left:0;top:40px;width:48px;height:6px;background:repeating-linear-gradient(90deg,#b7bfc5 0 4px,transparent 4px 6px)"></div><div class="n" style="left:4px;top:30px;width:44px;height:5px;background:repeating-linear-gradient(90deg,transparent 0 8px,#b7bfc5 8px 10px,transparent 10px 12px)"></div></div>
<div class="c p" style="left:973px;top:501px;width:96px;height:60px"><div class="h" style="right:84px"></div></div>
<div class="c p" style="left:1069px;top:501px;width:94px;height:60px"><div class="h" style="right:82px"></div></div>
<div class="c p" style="left:1163px;top:501px;width:48px;height:60px"><div class="h">Cob..2</div></div>
<div class="c p" style="left:1211px;top:501px;width:48px;height:60px"><div class="h">Cob..2</div></div>
<div class="c p" style="left:1259px;top:501px;width:48px;height:60px"><div class="h">Cob..2</div></div>
<div class="c p" style="left:1307px;top:501px;width:48px;height:60px"><div class="h">Cob..2</div></div>
<div class="c p" style="left:1355px;top:501px;width:48px;height:60px"><div class="h">Ge..#2</div><div class="n" style="left:0;top:40px;width:48px;height:6px;background:repeating-linear-gradient(90deg,#b7bfc5 0 4px,transparent 4px 6px)"></div><div class="n" style="left:4px;top:30px;width:44px;height:5px;background:repeating-linear-gradient(90deg,transparent 0 8px,#b7bfc5 8px 10px,transparent 10px 12px)"></div></div>
<div class="c p" style="left:1403px;top:501px;width:48px;height:60px"><div class="h">Ge..#2</div><div class="n" style="left:0;top:40px;width:48px;height:6px;background:repeating-linear-gradient(90deg,#b7bfc5 0 4px,transparent 4px 6px)"></div><div class="n" style="left:4px;top:30px;width:44px;height:5px;background:repeating-linear-gradient(90deg,transparent 0 8px,#b7bfc5 8px 10px,transparent 10px 12px)"></div></div>

<!-- TRACK 10 -->
<div class="c p" style="left:401px;top:562px;width:48px;height:46px"><div class="h">Cy..e 2</div></div>
<div class="c p" style="left:449px;top:562px;width:48px;height:46px"><div class="h">Cy..e 2</div></div>
<div class="c p" style="left:497px;top:562px;width:48px;height:46px"><div class="h">Cy..e 2</div></div>
<div class="c p" style="left:545px;top:562px;width:48px;height:46px"><div class="h">Cy..e 2</div></div>
<div class="c p" style="left:783px;top:562px;width:48px;height:46px"><div class="h">Cy..e 2</div></div>
<div class="c p" style="left:831px;top:562px;width:48px;height:46px"><div class="h">Cy..e 2</div></div>
<div class="c p" style="left:973px;top:562px;width:48px;height:46px"><div class="h">Cy..e 2</div></div>
<div class="c p" style="left:1021px;top:562px;width:48px;height:46px"><div class="h">Cy..e 2</div></div>
<div class="c p" style="left:1069px;top:562px;width:48px;height:46px"><div class="h">Cy..e 2</div></div>
<div class="c p" style="left:1117px;top:562px;width:48px;height:46px"><div class="h">Cy..e 2</div></div>
<div class="c p" style="left:1355px;top:562px;width:48px;height:46px"><div class="h">Cy..e 2</div></div>
<div class="c p" style="left:1403px;top:562px;width:48px;height:46px"><div class="h">Cy..e 2</div></div>

<!-- TRACK 11 -->
<div class="c au" style="left:305px;top:609px;width:96px;height:60px"><div class="h">Love P..ency #2</div><svg class="ab" style="left:0;top:0" width="96" height="61"><path d="M0 60 L48 60 Q80 50 96 16 L96 61 L0 61Z" fill="rgba(255,255,255,.07)"/><path d="M0 60 L48 60 Q80 50 96 16" fill="none" stroke="#c4cbe0" stroke-width="1.2"/><circle cx="5" cy="11" r="1.8" fill="none" stroke="#e4e8f0" stroke-width="1"/><circle cx="10" cy="6" r="1.8" fill="none" stroke="#e4e8f0" stroke-width="1"/><line x1="6.3" y1="9.7" x2="8.7" y2="7.3" stroke="#e4e8f0"/></svg></div>
<div class="c au" style="left:401px;top:609px;width:96px;height:60px;background:#3a4653"><div class="h">Love P..equency</div><svg class="ab" style="left:0;top:0" width="96" height="61"><line x1="0" y1="16.5" x2="96" y2="16.5" stroke="#c4cbe0" stroke-width="1.2"/><circle cx="5" cy="11" r="1.8" fill="none" stroke="#e4e8f0" stroke-width="1"/><circle cx="10" cy="6" r="1.8" fill="none" stroke="#e4e8f0" stroke-width="1"/><line x1="6.3" y1="9.7" x2="8.7" y2="7.3" stroke="#e4e8f0"/></svg></div>
<div class="c p" style="left:497px;top:609px;width:48px;height:60px"><div class="h">Cym..1</div></div>
<div class="c p" style="left:545px;top:609px;width:48px;height:60px"><div class="h">Cym..</div></div>
<div class="c p" style="left:783px;top:609px;width:12px;height:60px"><div class="h"></div></div>
<div class="c au" style="left:877px;top:609px;width:96px;height:60px"><div class="h">Love P..ency #2</div><svg class="ab" style="left:0;top:0" width="96" height="61"><path d="M0 60 L48 60 Q80 50 96 16 L96 61 L0 61Z" fill="rgba(255,255,255,.07)"/><path d="M0 60 L48 60 Q80 50 96 16" fill="none" stroke="#c4cbe0" stroke-width="1.2"/><circle cx="5" cy="11" r="1.8" fill="none" stroke="#e4e8f0" stroke-width="1"/><circle cx="10" cy="6" r="1.8" fill="none" stroke="#e4e8f0" stroke-width="1"/><line x1="6.3" y1="9.7" x2="8.7" y2="7.3" stroke="#e4e8f0"/></svg></div>
<div class="c au" style="left:973px;top:609px;width:96px;height:60px;background:#3a4653"><div class="h">Love P..equency</div><svg class="ab" style="left:0;top:0" width="96" height="61"><line x1="0" y1="16.5" x2="96" y2="16.5" stroke="#c4cbe0" stroke-width="1.2"/><circle cx="5" cy="11" r="1.8" fill="none" stroke="#e4e8f0" stroke-width="1"/><circle cx="10" cy="6" r="1.8" fill="none" stroke="#e4e8f0" stroke-width="1"/><line x1="6.3" y1="9.7" x2="8.7" y2="7.3" stroke="#e4e8f0"/></svg></div>
<div class="c p" style="left:1069px;top:609px;width:48px;height:60px"><div class="h">Cym..1</div></div>
<div class="c p" style="left:1117px;top:609px;width:48px;height:60px"><div class="h">Cym..</div></div>
<div class="c p" style="left:1355px;top:609px;width:12px;height:60px"><div class="h"></div></div>

<!-- TRACK 12 -->
<div class="c a" style="left:401px;top:670px;width:96px;height:60px"><div class="h"><span class="seg">↦</span><span class="seg">↦</span><span class="seg">↦</span><span class="seg">↦</span></div><svg class="ab" style="left:0;top:15px" width="96" height="46"><rect width="96" height="46" fill="url(#wv)"/></svg></div>
<div class="c p" style="left:497px;top:670px;width:48px;height:60px"><div class="h">Cy..e 2</div></div>
<div class="c p" style="left:545px;top:670px;width:48px;height:60px"><div class="h">Cy..e 2</div></div>
<div class="c p" style="left:783px;top:670px;width:48px;height:60px"><div class="h">Cy..e 2</div></div>
<div class="c p" style="left:831px;top:670px;width:48px;height:60px"><div class="h">Cy..e 2</div></div>
<div class="c a" style="left:973px;top:670px;width:96px;height:60px"><div class="h"><span class="seg">↦</span><span class="seg">↦</span><span class="seg">↦</span><span class="seg">↦</span></div><svg class="ab" style="left:0;top:15px" width="96" height="46"><rect width="96" height="46" fill="url(#wv)"/></svg></div>
<div class="c p" style="left:1069px;top:670px;width:48px;height:60px"><div class="h">Cy..e 2</div></div>
<div class="c p" style="left:1117px;top:670px;width:48px;height:60px"><div class="h">Cy..e 2</div></div>
<div class="c p" style="left:1355px;top:670px;width:48px;height:60px"><div class="h">Cy..e 2</div></div>
<div class="c p" style="left:1403px;top:670px;width:48px;height:60px"><div class="h">Cy..e 2</div></div>

<!-- TRACK 13 -->
<div class="c a" style="left:497px;top:731px;width:96px;height:61px"><div class="h"><span class="seg">↦</span><span class="seg">↦</span><span class="seg">↦</span><span class="seg">↦</span></div><svg class="ab" style="left:0;top:15px" width="96" height="46"><rect width="96" height="46" fill="url(#wv)"/></svg></div>
<div class="c p" style="left:783px;top:731px;width:48px;height:61px"><div class="h">Cym..</div></div>
<div class="c p" style="left:831px;top:731px;width:48px;height:61px"><div class="h">Cym..1</div></div>
<div class="c a" style="left:1069px;top:731px;width:95px;height:61px"><div class="h"><span class="seg">↦</span><span class="seg">↦</span><span class="seg">↦</span><span class="seg">↦</span></div><svg class="ab" style="left:0;top:15px" width="96" height="46"><rect width="96" height="46" fill="url(#wv)"/></svg></div>
<div class="c a" style="left:1355px;top:731px;width:190px;height:61px"><div class="h"><span class="seg">↦</span><span class="seg">↦</span><span class="seg">↦</span><span class="seg">↦</span><span class="seg">↦</span><span class="seg">↦</span><span class="seg">↦</span><span class="seg">↦</span></div><svg class="ab" style="left:0;top:15px" width="190" height="46"><rect width="190" height="46" fill="url(#wv)"/></svg></div>

</div>
</body></html>
